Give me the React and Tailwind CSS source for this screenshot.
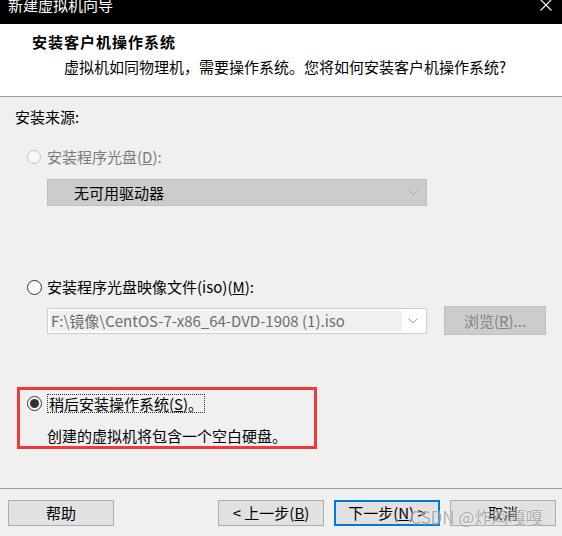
import React from "react";

const FONT = { fontFamily: '"Noto Sans CJK SC", "Noto Sans", sans-serif' };

function Chevron() {
  return (
    <svg width="10" height="6" viewBox="0 0 10 6" className="shrink-0">
      <polyline points="0.5,0.5 5,5 9.5,0.5" fill="none" stroke="#a8a8a8" strokeWidth="1" />
    </svg>
  );
}

function Radio({ state }) {
  if (state === "disabled") {
    return <div className="w-[14px] h-[14px] rounded-full border border-[#c4c4c4] bg-[#f7f7f7] shrink-0" />;
  }
  return (
    <div className="w-[15px] h-[15px] rounded-full border border-[#333333] bg-white shrink-0 flex items-center justify-center">
      {state === "checked" && <div className="w-[9px] h-[9px] rounded-full bg-[#333333]" />}
    </div>
  );
}

function Btn({ children, focused }) {
  return (
    <div
      className={
        "w-[106px] h-[26px] flex items-center justify-center text-[15px] leading-[20px] text-black bg-[#e1e1e1] " +
        (focused ? "border-2 border-[#0078d7]" : "border border-[#adadad]")
      }
    >
      {children}
    </div>
  );
}

export default function App() {
  return (
    <div className="w-[562px] h-[536px] overflow-hidden flex flex-col relative bg-[#f0f0f0]" style={FONT}>
      {/* Title bar */}
      <div className="h-[24px] bg-black flex items-start justify-between pl-[8px] pr-[10px] shrink-0">
        <div className="text-white text-[15px] leading-[15px] -mt-[3px]">新建虚拟机向导</div>
        <svg width="12" height="12" viewBox="0 0 12 12" className="-mt-[1px]">
          <line x1="0.5" y1="0.5" x2="11.5" y2="11.5" stroke="white" strokeWidth="1.1" />
          <line x1="11.5" y1="0.5" x2="0.5" y2="11.5" stroke="white" strokeWidth="1.1" />
        </svg>
      </div>

      {/* Header */}
      <div className="h-[73px] bg-white border-b border-[#a0a0a0] shrink-0 pl-[32px] pt-[8px]">
        <div className="text-[15px] leading-[20px] font-bold text-black tracking-[1px]">安装客户机操作系统</div>
        <div className="text-[15px] leading-[20px] text-black pl-[32px] mt-[5px]">
          虚拟机如同物理机，需要操作系统。您将如何安装客户机操作系统?
        </div>
      </div>

      {/* Body */}
      <div className="flex flex-col text-[15px] leading-[20px]">
        <div className="ml-[15px] mt-[10px] h-[20px] text-black">安装来源:</div>

        <div className="ml-[27px] mt-[20px] h-[20px] flex items-center gap-[6px] text-[#7a7a7a]">
          <Radio state="disabled" />
          <span>
            安装程序光盘(<span className="underline">D</span>):
          </span>
        </div>

        <div className="ml-[47px] mt-[12px] w-[380px] h-[27px] bg-[#cccccc] border border-[#bfbfbf] flex items-center justify-between pl-[26px] pr-[8px] text-black">
          <span>无可用驱动器</span>
          <Chevron />
        </div>

        <div className="ml-[27px] mt-[71px] h-[20px] flex items-center gap-[5px] text-black">
          <Radio state="unchecked" />
          <span>
            安装程序光盘映像文件(iso)(<span className="underline">M</span>):
          </span>
        </div>

        <div className="ml-[47px] mt-[9px] h-[29px] flex items-center gap-[17px]">
          <div className="w-[380px] h-[26px] bg-white border border-[#cdcdcd] flex items-center p-[2px]">
            <div className="flex-1 h-full bg-[#f0f0f0] flex items-center pl-[1px] text-[#6d6d6d] overflow-hidden whitespace-nowrap">
              F:\镜像\CentOS-7-x86_64-DVD-1908 (1).iso
            </div>
            <div className="w-[22px] flex items-center justify-center">
              <Chevron />
            </div>
          </div>
          <div className="w-[102px] h-[29px] bg-[#cccccc] border border-[#bfbfbf] flex items-center justify-center text-[#838383]">
            浏览(<span className="underline">R</span>)...
          </div>
        </div>

        <div className="ml-[17px] mt-[52px] w-[300px] h-[62px] border-[3px] border-[#ee3a3d] flex flex-col">
          <div className="ml-[7px] mt-[4px] h-[20px] flex items-center gap-[5px] text-black">
            <Radio state="checked" />
            <span className="border border-dotted border-[#333333] leading-[17px] px-[1px]">
              稍后安装操作系统(<span className="underline">S</span>)。
            </span>
          </div>
          <div className="ml-[27px] mt-[13px] text-black">创建的虚拟机将包含一个空白硬盘。</div>
        </div>

        <div className="mt-[39px] h-[1px] bg-[#a0a0a0]" />

        <div className="mt-[11px] flex items-center pl-[8px] pr-[6px]">
          <Btn>帮助</Btn>
          <div className="ml-auto flex items-center gap-[10px]">
            <Btn>
              &lt; 上一步(<span className="underline">B</span>)
            </Btn>
            <Btn focused>
              下一步(<span className="underline">N</span>) &gt;
            </Btn>
            <Btn>取消</Btn>
          </div>
        </div>
      </div>

      {/* Watermark */}
      <div className="absolute left-[410px] top-[506px] text-[17px] leading-[22px] text-[rgba(110,110,110,0.55)] [text-shadow:0_0_2px_rgba(255,255,255,0.9)] whitespace-nowrap pointer-events-none">
        CSDN @炸鸡嘎嘎
      </div>
    </div>
  );
}
